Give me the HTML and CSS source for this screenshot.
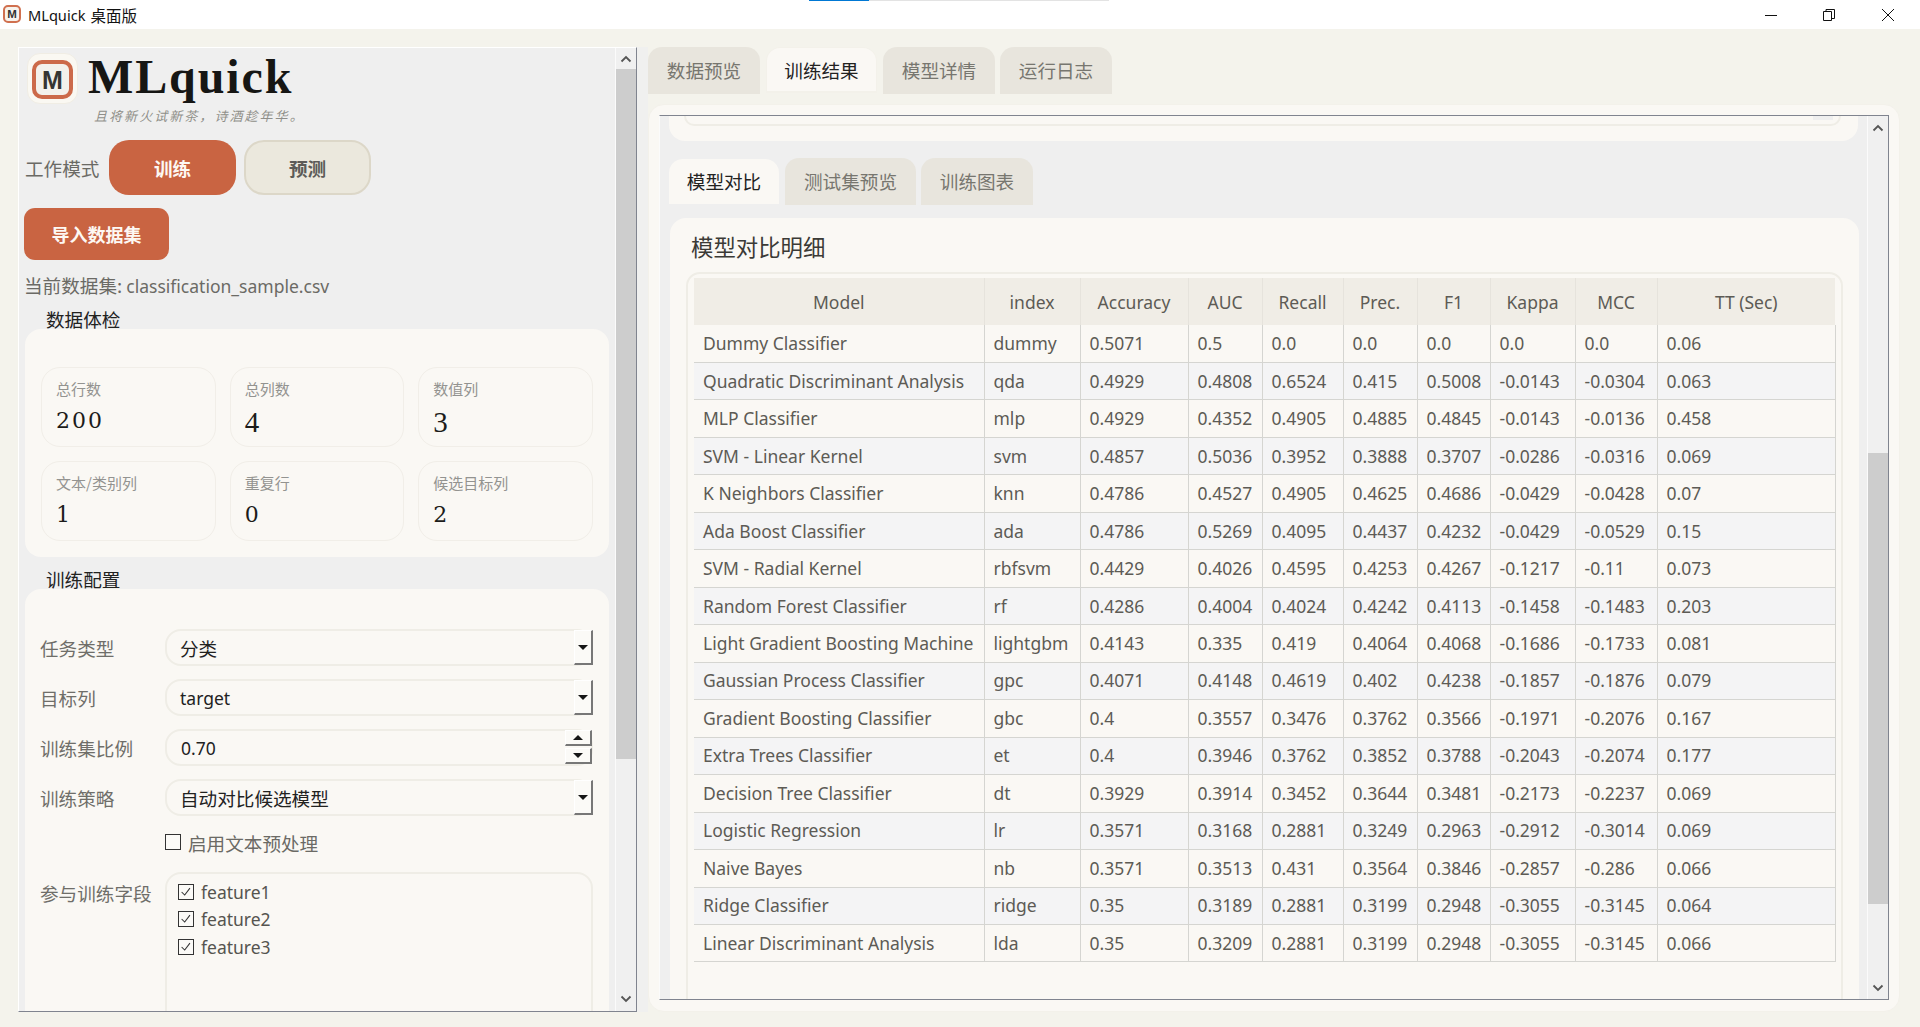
FILE: index.html
```html
<!DOCTYPE html>
<html lang="zh-CN">
<head>
<meta charset="utf-8">
<title>MLquick 桌面版</title>
<link rel="stylesheet" href="styles.css">
</head>
<body>
<header class="titlebar">
  <div class="progress"><span class="progress-done"></span><span class="progress-rest"></span></div>
  <svg class="app-icon" viewBox="0 0 18 18" width="18" height="18"><rect x="1" y="1" width="16" height="16" rx="4" fill="#f7f3ec" stroke="#d0704f" stroke-width="2"/><text x="9" y="13.4" text-anchor="middle" font-family="Liberation Sans" font-weight="700" font-size="11.5" fill="#333">M</text></svg>
  <span class="app-name">MLquick</span><span class="app-name-cjk">桌面版</span>
  <div class="win-controls">
    <span class="win-btn"><svg width="14" height="14" viewBox="0 0 14 14"><path d="M1 7.5H13" stroke="#111" fill="none"/></svg></span>
    <span class="win-btn"><svg width="14" height="14" viewBox="0 0 14 14"><path d="M1.5 3.5H9.5V12.5H1.5ZM4 3.5V1.5H12.5V10.5H9.5" stroke="#111" fill="none"/></svg></span>
    <span class="win-btn"><svg width="14" height="14" viewBox="0 0 14 14"><path d="M1 1L13 13M13 1L1 13" stroke="#111" fill="none"/></svg></span>
  </div>
</header>
<main class="main">
  <aside class="left">
    <div class="left-scroll">
      <div class="left-content">
        <div class="brand">
          <div class="logo">
            <svg viewBox="0 0 52 52" width="52" height="52"><rect x="7" y="9" width="37" height="35" rx="8" fill="#f3f1ec" stroke="#cc6a4a" stroke-width="4"/><text x="25.5" y="36" text-anchor="middle" font-family="Liberation Sans" font-weight="700" font-size="25" fill="#353533">M</text></svg>
          </div>
          <div class="brand-name">MLquick</div>
        </div>
        <div class="slogan">且将新火试新茶，诗酒趁年华。</div>
        <div class="mode-row">
          <span class="mode-label">工作模式</span>
          <button class="mode-btn mode-on">训练</button>
          <button class="mode-btn mode-off">预测</button>
        </div>
        <button class="import-btn">导入数据集</button>
        <div class="file-line">当前数据集: <span class="latin">classification_sample.csv</span></div>
        <div class="section-title">数据体检</div>
        <section class="card stats-card">
          <div class="stat"><div class="stat-label">总行数</div><div class="stat-value">200</div></div>
          <div class="stat"><div class="stat-label">总列数</div><div class="stat-value tall">4</div></div>
          <div class="stat"><div class="stat-label">数值列</div><div class="stat-value tall">3</div></div>
          <div class="stat"><div class="stat-label">文本/类别列</div><div class="stat-value">1</div></div>
          <div class="stat"><div class="stat-label">重复行</div><div class="stat-value">0</div></div>
          <div class="stat"><div class="stat-label">候选目标列</div><div class="stat-value">2</div></div>
        </section>
        <div class="section-title second">训练配置</div>
        <section class="card form-card">
          <div class="form-row"><label class="form-label">任务类型</label><div class="control"><span class="control-value">分类</span><span class="drop-btn"><i class="tri-down"></i></span></div></div>
          <div class="form-row"><label class="form-label">目标列</label><div class="control"><span class="control-value latin">target</span><span class="drop-btn"><i class="tri-down"></i></span></div></div>
          <div class="form-row"><label class="form-label">训练集比例</label><div class="control"><span class="control-value latin spin-value">0.70</span><span class="spin"><span class="spin-btn"><i class="tri-up"></i></span><span class="spin-btn"><i class="tri-down"></i></span></span></div></div>
          <div class="form-row"><label class="form-label">训练策略</label><div class="control"><span class="control-value">自动对比候选模型</span><span class="drop-btn"><i class="tri-down"></i></span></div></div>
          <div class="check-row"><span class="box"></span><span class="check-text">启用文本预处理</span></div>
          <div class="form-row fields-row">
            <label class="form-label">参与训练字段</label>
            <div class="fields">
              <div class="field"><span class="box"><svg viewBox="0 0 16 16" width="14" height="14"><path d="M3 8L6.5 11.5L12.5 3.5" fill="none" stroke="#333" stroke-width="1.2"/></svg></span><span class="latin">feature1</span></div>
              <div class="field"><span class="box"><svg viewBox="0 0 16 16" width="14" height="14"><path d="M3 8L6.5 11.5L12.5 3.5" fill="none" stroke="#333" stroke-width="1.2"/></svg></span><span class="latin">feature2</span></div>
              <div class="field"><span class="box"><svg viewBox="0 0 16 16" width="14" height="14"><path d="M3 8L6.5 11.5L12.5 3.5" fill="none" stroke="#333" stroke-width="1.2"/></svg></span><span class="latin">feature3</span></div>
            </div>
          </div>
        </section>
      </div>
      <div class="scrollbar">
        <span class="sb-btn sb-btn-left"><svg width="12" height="8" viewBox="0 0 12 8"><path d="M1.5 6.5L6 2L10.5 6.5" fill="none" stroke="#555" stroke-width="1.8"/></svg></span>
        <span class="sb-thumb thumb-left"></span>
        <span class="sb-track"></span>
        <span class="sb-btn sb-btn-left sb-btn-end"><svg width="12" height="8" viewBox="0 0 12 8"><path d="M1.5 1.5L6 6L10.5 1.5" fill="none" stroke="#555" stroke-width="1.8"/></svg></span>
      </div>
    </div>
  </aside>
  <section class="right">
    <nav class="tabs">
      <span class="tab t112">数据预览</span>
      <span class="tab t111 active">训练结果</span>
      <span class="tab t112">模型详情</span>
      <span class="tab t112 g5">运行日志</span>
    </nav>
    <div class="panel">
      <div class="inner">
        <div class="inner-content">
          <div class="clipped-card"><div class="clipped-box"><span class="clipped-bit"></span></div></div>
          <nav class="subtabs">
            <span class="subtab s110 active">模型对比</span>
            <span class="subtab s131">测试集预览</span>
            <span class="subtab s112 g5">训练图表</span>
          </nav>
          <section class="card compare-card">
            <h2 class="compare-title">模型对比明细</h2>
            <div class="table-box">
              <table class="grid">
                <colgroup><col class="c1"><col class="c2"><col class="c3"><col class="c4"><col class="c5"><col class="c6"><col class="c7"><col class="c8"><col class="c9"><col class="c10"></colgroup>
                <thead><tr><th>Model</th><th>index</th><th>Accuracy</th><th>AUC</th><th>Recall</th><th>Prec.</th><th>F1</th><th>Kappa</th><th>MCC</th><th>TT (Sec)</th></tr></thead>
                <tbody>
                  <tr><td>Dummy Classifier</td><td>dummy</td><td>0.5071</td><td>0.5</td><td>0.0</td><td>0.0</td><td>0.0</td><td>0.0</td><td>0.0</td><td>0.06</td></tr>
                  <tr><td>Quadratic Discriminant Analysis</td><td>qda</td><td>0.4929</td><td>0.4808</td><td>0.6524</td><td>0.415</td><td>0.5008</td><td>-0.0143</td><td>-0.0304</td><td>0.063</td></tr>
                  <tr><td>MLP Classifier</td><td>mlp</td><td>0.4929</td><td>0.4352</td><td>0.4905</td><td>0.4885</td><td>0.4845</td><td>-0.0143</td><td>-0.0136</td><td>0.458</td></tr>
                  <tr><td>SVM - Linear Kernel</td><td>svm</td><td>0.4857</td><td>0.5036</td><td>0.3952</td><td>0.3888</td><td>0.3707</td><td>-0.0286</td><td>-0.0316</td><td>0.069</td></tr>
                  <tr><td>K Neighbors Classifier</td><td>knn</td><td>0.4786</td><td>0.4527</td><td>0.4905</td><td>0.4625</td><td>0.4686</td><td>-0.0429</td><td>-0.0428</td><td>0.07</td></tr>
                  <tr><td>Ada Boost Classifier</td><td>ada</td><td>0.4786</td><td>0.5269</td><td>0.4095</td><td>0.4437</td><td>0.4232</td><td>-0.0429</td><td>-0.0529</td><td>0.15</td></tr>
                  <tr><td>SVM - Radial Kernel</td><td>rbfsvm</td><td>0.4429</td><td>0.4026</td><td>0.4595</td><td>0.4253</td><td>0.4267</td><td>-0.1217</td><td>-0.11</td><td>0.073</td></tr>
                  <tr><td>Random Forest Classifier</td><td>rf</td><td>0.4286</td><td>0.4004</td><td>0.4024</td><td>0.4242</td><td>0.4113</td><td>-0.1458</td><td>-0.1483</td><td>0.203</td></tr>
                  <tr><td>Light Gradient Boosting Machine</td><td>lightgbm</td><td>0.4143</td><td>0.335</td><td>0.419</td><td>0.4064</td><td>0.4068</td><td>-0.1686</td><td>-0.1733</td><td>0.081</td></tr>
                  <tr><td>Gaussian Process Classifier</td><td>gpc</td><td>0.4071</td><td>0.4148</td><td>0.4619</td><td>0.402</td><td>0.4238</td><td>-0.1857</td><td>-0.1876</td><td>0.079</td></tr>
                  <tr><td>Gradient Boosting Classifier</td><td>gbc</td><td>0.4</td><td>0.3557</td><td>0.3476</td><td>0.3762</td><td>0.3566</td><td>-0.1971</td><td>-0.2076</td><td>0.167</td></tr>
                  <tr><td>Extra Trees Classifier</td><td>et</td><td>0.4</td><td>0.3946</td><td>0.3762</td><td>0.3852</td><td>0.3788</td><td>-0.2043</td><td>-0.2074</td><td>0.177</td></tr>
                  <tr><td>Decision Tree Classifier</td><td>dt</td><td>0.3929</td><td>0.3914</td><td>0.3452</td><td>0.3644</td><td>0.3481</td><td>-0.2173</td><td>-0.2237</td><td>0.069</td></tr>
                  <tr><td>Logistic Regression</td><td>lr</td><td>0.3571</td><td>0.3168</td><td>0.2881</td><td>0.3249</td><td>0.2963</td><td>-0.2912</td><td>-0.3014</td><td>0.069</td></tr>
                  <tr><td>Naive Bayes</td><td>nb</td><td>0.3571</td><td>0.3513</td><td>0.431</td><td>0.3564</td><td>0.3846</td><td>-0.2857</td><td>-0.286</td><td>0.066</td></tr>
                  <tr><td>Ridge Classifier</td><td>ridge</td><td>0.35</td><td>0.3189</td><td>0.2881</td><td>0.3199</td><td>0.2948</td><td>-0.3055</td><td>-0.3145</td><td>0.064</td></tr>
                  <tr><td>Linear Discriminant Analysis</td><td>lda</td><td>0.35</td><td>0.3209</td><td>0.2881</td><td>0.3199</td><td>0.2948</td><td>-0.3055</td><td>-0.3145</td><td>0.066</td></tr>
                </tbody>
              </table>
            </div>
          </section>
        </div>
        <div class="scrollbar">
          <span class="sb-btn sb-btn-right"><svg width="12" height="8" viewBox="0 0 12 8"><path d="M1.5 6.5L6 2L10.5 6.5" fill="none" stroke="#555" stroke-width="1.8"/></svg></span>
          <span class="sb-track sb-track-top"></span>
          <span class="sb-thumb thumb-right"></span>
          <span class="sb-track"></span>
          <span class="sb-btn sb-btn-right"><svg width="12" height="8" viewBox="0 0 12 8"><path d="M1.5 1.5L6 6L10.5 1.5" fill="none" stroke="#555" stroke-width="1.8"/></svg></span>
        </div>
      </div>
    </div>
  </section>
</main>
</body>
</html>
```
FILE: styles.css
```css
* { box-sizing: border-box; }
html, body { margin: 0; height: 100%; }
body {
  width: 1920px; height: 1027px; overflow: hidden;
  display: flex; flex-direction: column;
  background: #f4f3ec;
  font-family: "Noto Sans CJK SC", "Noto Sans", sans-serif;
  font-size: 18.6px; color: #6b6a65;
}
.latin { font-family: "Noto Sans", "Noto Sans CJK SC", sans-serif; font-size: 17.5px; }
button { font: inherit; cursor: default; }

/* title bar */
.titlebar {
  position: relative; flex: none; height: 29px; background: #fff;
  display: flex; align-items: center; padding-left: 3px; color: #111;
}
.progress { position: absolute; top: 0; left: 809px; display: flex; height: 1px; }
.progress-done { width: 60px; background: #0078d4; }
.progress-rest { width: 240px; background: #e3e3e3; }
.app-icon { flex: none; margin-top: -1px; }
.app-name { margin-left: 7px; font: 14.6px "Noto Sans", sans-serif; }
.app-name-cjk { margin-left: 5px; font-size: 15.5px; }
.win-controls { margin-left: auto; display: flex; padding-right: 3px; }
.win-btn { width: 58.5px; height: 29px; display: flex; align-items: center; justify-content: center; }

/* layout */
.main { flex: 1; min-height: 0; display: flex; padding: 18px 20px 15px 18px; }
.left { flex: none; width: 630px; background: #f0f0ef; }
.left-scroll {
  width: 619px; height: 100%; display: flex; overflow: hidden;
  background: #efefef;
  border-top: 1px solid #fff; border-left: 1px solid #fff;
  border-right: 1px solid #80848f; border-bottom: 1px solid #80848f;
}
.left-content { flex: none; width: 596px; overflow: hidden; }
.right { flex: 1; min-width: 0; display: flex; flex-direction: column; }

/* scrollbars */
.scrollbar { flex: none; width: 21px; display: flex; flex-direction: column; border-left: 1px solid #fbfbfb; background: #f0f0f0; }
.sb-btn { flex: none; display: flex; align-items: center; justify-content: center; }
.sb-btn-left { height: 21px; }
.sb-btn-end { height: 24px; }
.sb-btn-right { height: 23px; }
.sb-track { flex: 1; }
.sb-track-top { flex: none; height: 314px; }
.sb-thumb { flex: none; background: #cdcdcd; }
.thumb-left { height: 690px; }
.thumb-right { height: 451px; }

/* brand */
.brand { display: flex; align-items: flex-start; padding: 5px 0 0 8px; height: 56px; }
.logo { flex: none; width: 51px; height: 51px; border-radius: 13px; background: #faf8f2; border: 1px solid #f0ede4; overflow: hidden; }
.logo svg { display: block; margin: -1px; }
.brand-name {
  margin: -4px 0 0 10px; font-family: "Liberation Serif", serif; font-weight: 700;
  font-size: 48px; line-height: 56px; letter-spacing: 1.9px; color: #161614;
}
.slogan {
  margin: 2px 0 0 75px; height: 20px; line-height: 20px; font-size: 13px; font-style: italic;
  letter-spacing: 2.05px; color: #8f8f8a; white-space: nowrap;
}
.mode-row { display: flex; align-items: center; margin: 14px 0 0 6px; height: 55px; }
.mode-label { width: 84px; }
.mode-btn { width: 127px; height: 55px; border-radius: 20px; font-weight: 700; padding: 0; }
.mode-on { background: #c96442; color: #fdf8f3; border: 0; }
.mode-off { margin-left: 8px; background: #ebe8dd; color: #5c5b57; border: 2px solid #dcd7c8; }
.import-btn {
  display: block; width: 145px; height: 52px; margin: 13px 0 0 5px; border: 0; padding: 0;
  border-radius: 11px; background: #c96442; color: #fdf8f3; font-weight: 700; font-size: 18px;
}
.file-line { margin: 13px 0 0 5px; height: 24px; line-height: 24px; white-space: nowrap; }
.section-title { margin: 14px 0 0 27px; height: 18px; line-height: 16px; color: #22221f; }
.section-title.second { margin-top: 14px; }

/* cards */
.card { background: #faf8f4; border-radius: 16px; }
.stats-card {
  margin-left: 6px; width: 584px; padding: 38px 16px 16px;
  display: grid; grid-template-columns: repeat(3, 1fr); grid-auto-rows: 80px; gap: 14px;
}
.stat { border: 1px solid #f1eee8; border-radius: 19px; padding: 11px 14px 0; }
.stat-label { height: 20px; line-height: 20px; font-size: 15px; color: #939390; }
.stat-value { margin-top: 12px; height: 20px; font: 22px/20px "DejaVu Serif", serif; letter-spacing: 2px; color: #1c1c1a; }
.stat-value.tall { margin-top: 10px; height: 26px; font: 29px/26px "Liberation Serif", serif; letter-spacing: 0; }

.form-card { margin-left: 6px; width: 584px; padding: 40px 16px 0 16px; height: 600px; }
.form-row { display: flex; height: 37px; margin-bottom: 13px; }
.form-label { flex: none; width: 125px; margin-left: -1px; line-height: 38px; color: #6f6e69; }
.control {
  flex: 1; min-width: 0; display: flex; justify-content: space-between;
  border: 2px solid #efede6; border-radius: 16px; color: #22221f;
}
.control-value { padding-left: 13px; line-height: 33px; }
.control-value.latin { line-height: 35px; }
.spin-value { padding-left: 14px; }
.drop-btn {
  flex: none; width: 19px; height: 35px; margin: -1px -2px 0 0; display: flex; align-items: center; justify-content: center;
  background: #fbfaf7; border-style: solid; border-width: 1px 2px 2px 1px; border-color: #fff #777 #777 #fff;
}
.spin { flex: none; display: flex; flex-direction: column; gap: 2px; margin: -1px -1px 0 0; }
.spin-btn {
  width: 27px; height: 16px; display: flex; align-items: center; justify-content: center;
  background: #fbfaf7; border-style: solid; border-width: 1px 2px 2px 1px; border-color: #fff #777 #777 #fff;
}
.tri-down { width: 0; height: 0; border: 5px solid transparent; border-top: 5px solid #161616; border-bottom: 0; }
.tri-up { width: 0; height: 0; border: 5px solid transparent; border-bottom: 5px solid #161616; border-top: 0; }
.box { flex: none; width: 16px; height: 16px; border: 1px solid #333; background: #fbfaf7; display: flex; align-items: center; justify-content: center; }
.check-row { display: flex; align-items: center; gap: 7px; height: 30px; margin: 0 0 13px 124px; }
.check-row .box { margin-top: -4px; }
.check-text { line-height: 28px; height: 30px; }
.fields-row { height: 400px; margin: 0; }
.fields-row .form-label { line-height: 42px; }
.fields { flex: 1; border: 2px solid #efede6; border-radius: 16px; padding: 4px 11px; }
.field { display: flex; align-items: center; gap: 7px; height: 27.5px; color: #55544f; }

/* right tabs */
.tabs, .subtabs { display: flex; flex: none; }
.tabs { height: 47px; }
.tab, .subtab { height: 47px; line-height: 45px; text-align: center; background: #e8e5dd; color: #77766f; border-radius: 14px 14px 0 0; margin-right: 6px; }
.tab.active, .subtab.active { background: #faf8f4; color: #22221f; }
.tab.active { height: 46px; line-height: 43px; border: 1px solid #f3f1ea; border-bottom-width: 2px; }
.g5 { margin-left: -1px; }
.t112 { width: 112px; }
.t111 { width: 111px; }
.s110 { width: 110px; }
.s131 { width: 131px; }
.s112 { width: 112px; }
.panel {
  flex: 1; min-height: 0; margin: 10px 0 0 0; padding: 10px 10px 11px 10px;
  background: #faf8f4; border: 1px solid #f3f1ea; border-radius: 16px;
}
.inner {
  height: 100%; display: flex; overflow: hidden; background: #efefef;
  border-top: 1px solid #80848f; border-right: 1px solid #80848f; border-bottom: 1px solid #80848f; border-left: 1px solid #fbfbfb;
}
.inner-content { flex: 1; min-width: 0; overflow: hidden; padding-left: 9px; padding-right: 9px; }
.clipped-card { height: 25px; padding: 0 17px 0 15px; background: #faf8f4; border-radius: 0 0 16px 16px; margin-right: 0; }
.clipped-box { height: 10px; border: 2px solid #efede6; border-top: 0; border-radius: 0 0 14px 14px; display: flex; justify-content: flex-end; padding-right: 6px; }
.clipped-bit { width: 20px; height: 4px; background: #efefef; }
.subtabs { margin-top: 17px; height: 47px; }
.subtab.active { height: 45px; margin-top: 1px; line-height: 43px; }
.compare-card { margin: 13px 0 0 1px; padding: 13px 16px 0; height: 900px; width: 1189px; }
.compare-title { margin: 0; height: 31px; line-height: 30px; font-size: 22.4px; font-weight: 400; color: #3b3a36; padding-left: 5px; }
.table-box { margin-top: 10px; padding: 4px 6px 80px; border: 2px solid #efede6; border-radius: 14px; }

/* table */
.grid { width: 1141px; table-layout: fixed; border-collapse: collapse; font-family: "Noto Sans", sans-serif; font-size: 17.5px; color: #5d5b55; }
.c1 { width: 290px; } .c2 { width: 96px; } .c3 { width: 108px; } .c4 { width: 74px; } .c5 { width: 81px; }
.c6 { width: 74px; } .c7 { width: 73px; } .c8 { width: 85px; } .c9 { width: 82px; } .c10 { width: 178px; }
.grid th { height: 47px; padding: 0; font-weight: 400; background: #f0ede6; border-right: 1px solid #e6e3dc; white-space: nowrap; }
.grid th:last-child { border-right: 0; }
.grid tbody tr { height: 37.47px; }
.grid tbody tr:nth-child(even) { background: #f4f4f5; }
.grid td { padding: 0 0 1px 9px; border: 1px solid #d5d5d1; border-top: 0; white-space: nowrap; overflow: hidden; }
.grid td:first-child { border-left: 0; }
```
